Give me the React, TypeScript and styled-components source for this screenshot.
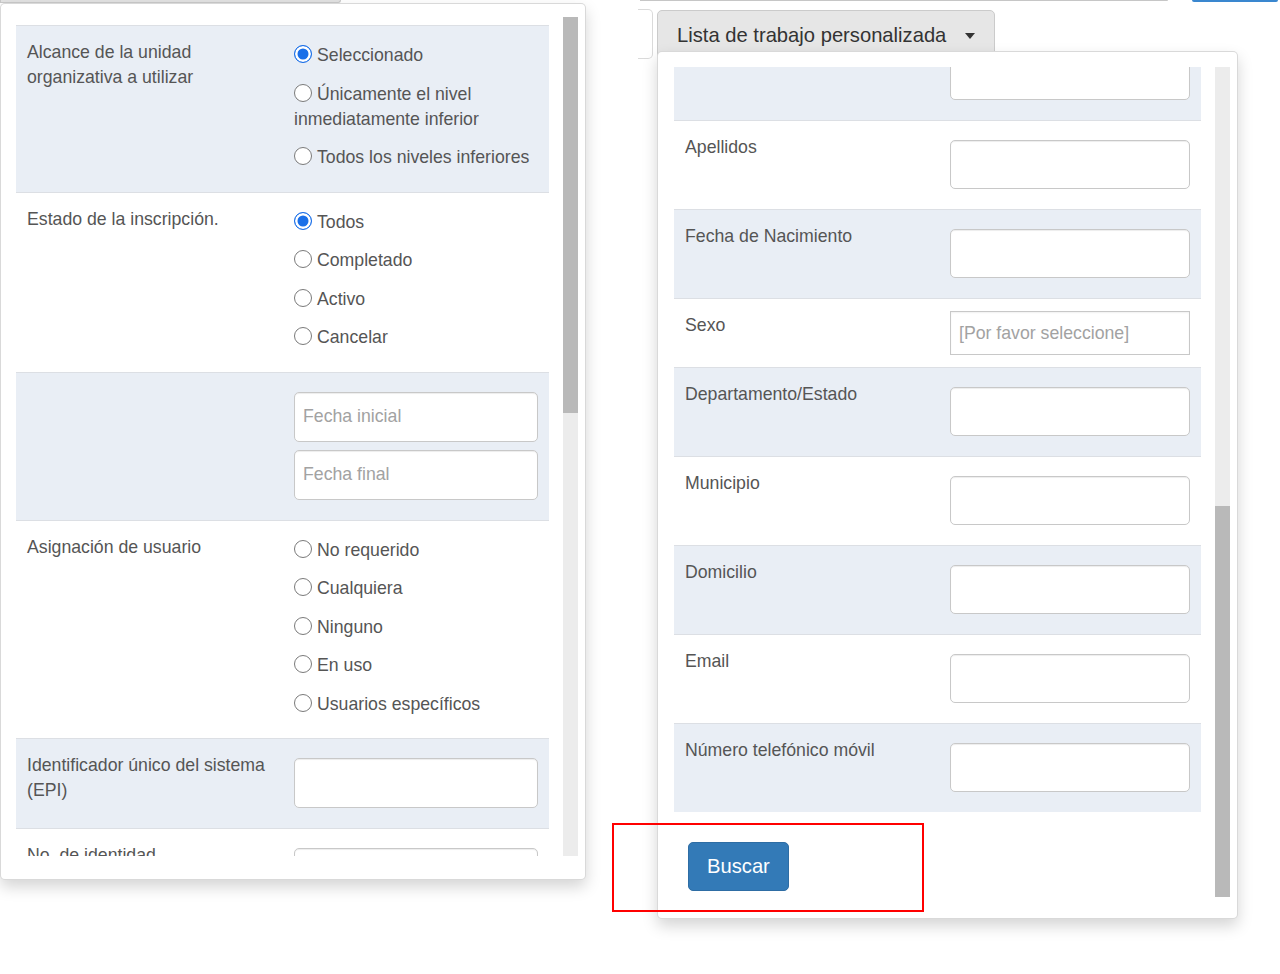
import React from 'react'
import styled, { createGlobalStyle } from 'styled-components'

type Field =
    | { kind: 'radios'; label: string; options: string[]; checked?: number }
    | { kind: 'inputs'; label: string; placeholders: string[] }
    | { kind: 'select'; label: string; placeholder: string }

const leftFields: Field[] = [
    {
        kind: 'radios',
        label: 'Alcance de la unidad organizativa a utilizar',
        options: [ 'Seleccionado', 'Únicamente el nivel inmediatamente inferior', 'Todos los niveles inferiores' ],
        checked: 0,
    },
    {
        kind: 'radios',
        label: 'Estado de la inscripción.',
        options: [ 'Todos', 'Completado', 'Activo', 'Cancelar' ],
        checked: 0,
    },
    { kind: 'inputs', label: '', placeholders: [ 'Fecha inicial', 'Fecha final' ] },
    {
        kind: 'radios',
        label: 'Asignación de usuario',
        options: [ 'No requerido', 'Cualquiera', 'Ninguno', 'En uso', 'Usuarios específicos' ],
    },
    { kind: 'inputs', label: 'Identificador único del sistema (EPI)', placeholders: [ '' ] },
    { kind: 'inputs', label: 'No. de identidad', placeholders: [ '' ] },
]

// first row is scrolled above the top edge, its label is out of view
const rightFields: Field[] = [
    { kind: 'inputs', label: '', placeholders: [ '' ] },
    { kind: 'inputs', label: 'Apellidos', placeholders: [ '' ] },
    { kind: 'inputs', label: 'Fecha de Nacimiento', placeholders: [ '' ] },
    { kind: 'select', label: 'Sexo', placeholder: '[Por favor seleccione]' },
    { kind: 'inputs', label: 'Departamento/Estado', placeholders: [ '' ] },
    { kind: 'inputs', label: 'Municipio', placeholders: [ '' ] },
    { kind: 'inputs', label: 'Domicilio', placeholders: [ '' ] },
    { kind: 'inputs', label: 'Email', placeholders: [ '' ] },
    { kind: 'inputs', label: 'Número telefónico móvil', placeholders: [ '' ] },
]

const GlobalStyle = createGlobalStyle`
    html, body {
        margin: 0;
        padding: 0;
        background: #fff;
    }
    body {
        font-family: "Liberation Sans", Arial, Helvetica, sans-serif;
        font-size: 17.7px;
        line-height: 25px;
        color: #555;
    }
`

const Page = styled.div`
    position: relative;
    display: flex;
    width: 1280px;
    height: 974px;
    overflow: hidden;
`

const LeftColumn = styled.div`
    flex: none;
    width: 586px;
    display: flex;
    flex-direction: column;
`

const RightColumn = styled.div`
    flex: none;
    width: 642px;
    margin-left: 52px;
    display: flex;
    flex-direction: column;
`

const ButtonEdge = styled.div<{ $width: number }>`
    box-sizing: border-box;
    width: ${ p => p.$width }px;
    height: 3px;
    background: #e2e2e2;
    border: 1px solid #c9c9c9;
    border-top: none;
    border-radius: 0 0 4px 0;
`

const EdgeRow = styled.div`
    display: flex;
    align-items: flex-start;
    height: 2px;
`

const GreyEdge = styled.div`
    width: 528px;
    height: 1px;
    margin-left: 2px;
    background: #c6c6c6;
    border-radius: 0 0 3px 0;
`

const BlueEdge = styled.div`
    width: 86px;
    height: 2px;
    margin-left: 24px;
    background: #3a87cf;
    border-radius: 0 0 3px 3px;
`

const Toolbar = styled.div`
    display: flex;
    gap: 4px;
    margin-top: 7px;
`

const Stub = styled.div`
    box-sizing: border-box;
    width: 15px;
    height: 50px;
    border: 1px solid #dadada;
    border-left: none;
    border-radius: 0 5px 5px 0;
    background: #fff;
`

const Dropdown = styled.div`
    position: relative;
    margin-top: 1px;
`

const ToggleButton = styled.div`
    box-sizing: border-box;
    width: 338px;
    height: 50px;
    display: flex;
    align-items: center;
    padding: 0 19px;
    background: #e6e6e6;
    border: 1px solid #cbcbcb;
    border-radius: 5px;
    color: #333;
    font-size: 20.2px;
    white-space: nowrap;
`

const Caret = styled.span`
    display: inline-block;
    width: 0;
    height: 0;
    margin-left: 19px;
    margin-top: 1px;
    border-top: 6px solid #333;
    border-left: 5px solid transparent;
    border-right: 5px solid transparent;
`

const Panel = styled.div<{ $pad: string }>`
    box-sizing: border-box;
    display: flex;
    gap: 14px;
    padding: ${ p => p.$pad };
    background: #fff;
    border: 1px solid rgba(0, 0, 0, 0.15);
    border-radius: 5px;
    box-shadow: 0 7px 15px rgba(0, 0, 0, 0.17);
`

const Menu = styled(Panel)`
    position: absolute;
    top: 41px;
    left: 0;
    width: 581px;
`

const ScrollArea = styled.div<{ $height: number }>`
    flex: 1;
    height: ${ p => p.$height }px;
    overflow: hidden;
`

const ScrollContent = styled.div<{ $shift: number }>`
    margin-top: ${ p => p.$shift }px;
`

const ScrollTrack = styled.div<{ $height: number }>`
    flex: none;
    width: 15px;
    height: ${ p => p.$height }px;
    background: #ececec;
`

const ScrollThumb = styled.div<{ $top: number; $height: number }>`
    margin-top: ${ p => p.$top }px;
    height: ${ p => p.$height }px;
    background: #b9b9b9;
`

const Row = styled.div<{ $shaded: boolean; $labelWidth: number; $compact?: boolean }>`
    display: grid;
    grid-template-columns: ${ p => p.$labelWidth }px 1fr;
    padding: 14px 11px ${ p => p.$compact ? 10 : 11 }px;
    border-top: 1px solid #dcdfe4;
    background: ${ p => p.$shaded ? '#e9eef5' : '#fff' };
`

const Label = styled.div`
    padding-right: 22px;
    line-height: 25px;
`

const RadioGroup = styled.div`
    display: flex;
    flex-direction: column;
    gap: 13.5px;
    margin: 3px 0 10.5px;
`

const Option = styled.div`
    line-height: 25px;
`

const Radio = styled.span<{ $checked: boolean }>`
    box-sizing: border-box;
    display: inline-block;
    width: 18px;
    height: 18px;
    margin-right: 5px;
    vertical-align: -2px;
    border-radius: 50%;
    border: ${ p => p.$checked ? '1.5px solid #1a6fe8' : '1.5px solid #7a7a7a' };
    background: ${ p => p.$checked ? '#1a6fe8' : '#fff' };
    box-shadow: ${ p => p.$checked ? 'inset 0 0 0 2.5px #fff' : 'none' };
`

const InputStack = styled.div<{ $top: number }>`
    display: flex;
    flex-direction: column;
    gap: 8px;
    margin-top: ${ p => p.$top }px;
    margin-bottom: ${ p => 14 - p.$top }px;
`

const TextInput = styled.input<{ $height: number }>`
    box-sizing: border-box;
    width: 100%;
    height: ${ p => p.$height }px;
    padding: 0 8px;
    border: 1px solid #c8c8c8;
    border-radius: 5px;
    background: #fff;
    box-shadow: inset 0 1px 1px rgba(0, 0, 0, 0.075);
    font-family: inherit;
    font-size: 17.7px;
    color: #555;
    outline: none;

    &::placeholder {
        color: #a2a2a2;
    }
`

const SelectBox = styled.div`
    box-sizing: border-box;
    height: 44px;
    margin: -2px 0 2px;
    display: flex;
    align-items: center;
    padding: 0 8px;
    border: 1px solid #c8c8c8;
    background: #fff;
    box-shadow: inset 0 1px 2px rgba(0, 0, 0, 0.06);
    color: #a2a2a2;
    white-space: nowrap;
`

const ActionRow = styled.div`
    display: flex;
    padding: 30px 14px 0;
`

const SearchButton = styled.button`
    height: 49px;
    padding: 0 18px;
    background: #337ab7;
    border: 1px solid #2e6da4;
    border-radius: 5px;
    color: #fff;
    font-family: inherit;
    font-size: 20.2px;
    cursor: pointer;
`

const Highlight = styled.div`
    position: absolute;
    left: 612px;
    top: 823px;
    width: 312px;
    height: 89px;
    box-sizing: border-box;
    border: 2.5px solid #ff0000;
    pointer-events: none;
`

const FieldRow = ({ field, shaded, labelWidth, inputHeight, inputTop }: {
    field: Field
    shaded: boolean
    labelWidth: number
    inputHeight: number
    inputTop: number
}) => (
    <Row $shaded={ shaded } $labelWidth={ labelWidth } $compact={ field.kind === 'select' }>
        <Label>{ field.label }</Label>
        <div>
            { field.kind === 'radios' && (
                <RadioGroup>
                    { field.options.map((option, i) => (
                        <Option key={ option }>
                            <Radio $checked={ field.checked === i }/>
                            { option }
                        </Option>
                    )) }
                </RadioGroup>
            ) }
            { field.kind === 'inputs' && (
                <InputStack $top={ inputTop }>
                    { field.placeholders.map((placeholder, i) => (
                        <TextInput key={ i } $height={ inputHeight } placeholder={ placeholder } readOnly/>
                    )) }
                </InputStack>
            ) }
            { field.kind === 'select' && <SelectBox>{ field.placeholder }</SelectBox> }
        </div>
    </Row>
)

const App = () => {
    return (
        <>
            <GlobalStyle/>
            <Page>
                <LeftColumn>
                    <ButtonEdge $width={ 341 }/>
                    <Panel $pad="13px 7px 23px 15px">
                        <ScrollArea $height={ 839 }>
                            <ScrollContent $shift={ 8 }>
                                { leftFields.map((field, i) => (
                                    <FieldRow
                                        key={ field.label + i }
                                        field={ field }
                                        shaded={ i % 2 === 0 }
                                        labelWidth={ 267 }
                                        inputHeight={ 50 }
                                        inputTop={ 5 }
                                    />
                                )) }
                            </ScrollContent>
                        </ScrollArea>
                        <ScrollTrack $height={ 839 }>
                            <ScrollThumb $top={ 0 } $height={ 396 }/>
                        </ScrollTrack>
                    </Panel>
                </LeftColumn>

                <RightColumn>
                    <EdgeRow>
                        <GreyEdge/>
                        <BlueEdge/>
                    </EdgeRow>
                    <Toolbar>
                        <Stub/>
                        <Dropdown>
                            <ToggleButton>
                                Lista de trabajo personalizada
                                <Caret/>
                            </ToggleButton>
                            <Menu $pad="15px 7px 21px 16px">
                                <ScrollArea $height={ 830 }>
                                    <ScrollContent $shift={ -36 }>
                                        { rightFields.map((field, i) => (
                                            <FieldRow
                                                key={ field.label + i }
                                                field={ field }
                                                shaded={ i % 2 === 0 }
                                                labelWidth={ 265 }
                                                inputHeight={ 49 }
                                                inputTop={ 5 }
                                            />
                                        )) }
                                        <ActionRow>
                                            <SearchButton type="button">Buscar</SearchButton>
                                        </ActionRow>
                                    </ScrollContent>
                                </ScrollArea>
                                <ScrollTrack $height={ 830 }>
                                    <ScrollThumb $top={ 439 } $height={ 391 }/>
                                </ScrollTrack>
                            </Menu>
                        </Dropdown>
                    </Toolbar>
                </RightColumn>

                <Highlight/>
            </Page>
        </>
    )
}

export default App
